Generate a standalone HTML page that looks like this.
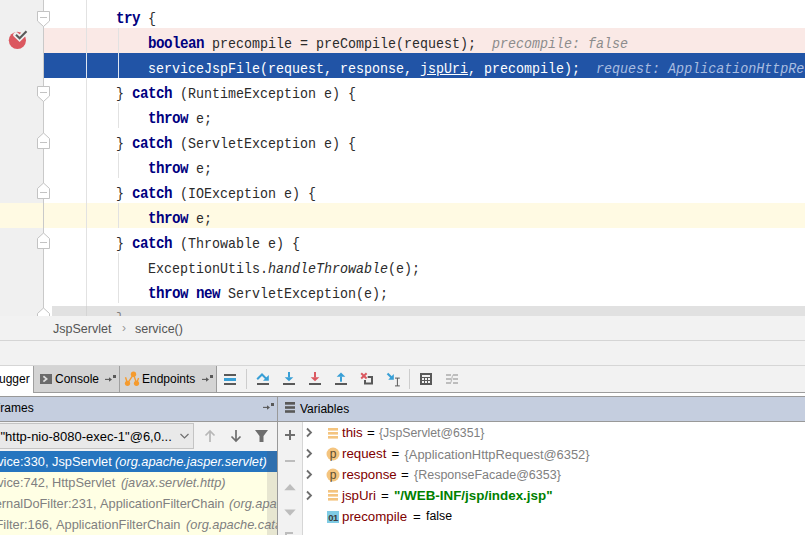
<!DOCTYPE html>
<html><head><meta charset="utf-8">
<style>
*{margin:0;padding:0;box-sizing:border-box}
html,body{width:805px;height:535px;overflow:hidden;background:#fff;font-family:"Liberation Sans",sans-serif}
.abs{position:absolute}
#editor{position:absolute;left:0;top:0;width:805px;height:316px;background:#fff;overflow:hidden}
#gutter{position:absolute;left:0;top:0;width:44px;height:316px;background:#f0f0f0}
.row{position:absolute;left:0;width:805px;height:25px}
.code{position:absolute;left:52px;margin-top:4px;white-space:pre;font-family:"Liberation Mono",monospace;font-size:15px;line-height:25px;transform-origin:0 0;transform:scaleX(0.88889);color:#2b2b2b}
.kw{color:#000080;font-weight:bold;font-size:16px;letter-spacing:-0.6px}
.hint{color:#8c8c8c;font-style:italic}
.ig{position:absolute;width:1px;background:#e2e2e2}
#crumbs{position:absolute;left:0;top:316px;width:805px;height:25px;background:#f2f2f2;border-bottom:1px solid #d5d5d5}
.ui{font-family:"Liberation Sans",sans-serif;font-size:12px;white-space:pre}
</style></head><body>
<div id="editor">
  <div id="gutter"></div>
  <!-- row backgrounds -->
  <div class="row" style="top:28px;left:44px;background:#fae9e6"></div>
  <div class="row" style="top:53px;left:44px;background:#2154a6"></div>
  <div class="row" style="top:203px;background:#fffae3"></div>
  <!-- gutter line -->
  <div class="abs" style="left:43px;top:0;width:1px;height:316px;background:#c9c9c9"></div>
  <!-- indent guides -->
  <div class="ig" style="left:86px;top:0;height:316px"></div>
  <div class="ig" style="left:118px;top:28px;height:50px"></div>
  <div class="ig" style="left:118px;top:103px;height:25px"></div>
  <div class="ig" style="left:118px;top:153px;height:25px"></div>
  <div class="ig" style="left:118px;top:203px;height:25px"></div>
  <div class="ig" style="left:118px;top:253px;height:50px"></div>
  <div class="abs" style="left:86px;top:53px;width:1px;height:25px;background:#dfe6f2"></div>
  <div class="abs" style="left:118px;top:53px;width:1px;height:25px;background:#dfe6f2"></div>
  <!-- code -->
  <div class="code" style="top:3px">        <span class="kw">try</span> {</div>
  <div class="code" style="top:28px">            <span class="kw">boolean</span> precompile = preCompile(request);  <span class="hint">precompile: false</span></div>
  <div class="code" style="top:53px;color:#fff">            serviceJspFile(request, response, <u>jspUri</u>, precompile);  <span class="hint" style="color:#a9bde0">request: ApplicationHttpRequest@6352</span></div>
  <div class="code" style="top:78px">        } <span class="kw">catch</span> (RuntimeException e) {</div>
  <div class="code" style="top:103px">            <span class="kw">throw</span> e;</div>
  <div class="code" style="top:128px">        } <span class="kw">catch</span> (ServletException e) {</div>
  <div class="code" style="top:153px">            <span class="kw">throw</span> e;</div>
  <div class="code" style="top:178px">        } <span class="kw">catch</span> (IOException e) {</div>
  <div class="code" style="top:203px">            <span class="kw">throw</span> e;</div>
  <div class="code" style="top:228px">        } <span class="kw">catch</span> (Throwable e) {</div>
  <div class="code" style="top:253px">            ExceptionUtils.<i>handleThrowable</i>(e);</div>
  <div class="code" style="top:278px">            <span class="kw">throw new</span> ServletException(e);</div>
  <div class="code" style="top:303px">        }</div>
  <!-- scrollbar -->
  <div class="abs" style="left:52px;top:306px;width:753px;height:10px;background:rgba(200,200,200,0.55)"></div>
  <!-- fold markers -->
  <svg class="abs" style="left:0;top:0" width="60" height="316">
    <g fill="#fff" stroke="#c3c3c3" stroke-width="1">
      <path d="M37.5 11.5H49.5V21L43.5 26.5L37.5 21Z"/>
      <path d="M37.5 86.5H49.5V96L43.5 101.5L37.5 96Z"/>
      <path d="M37.5 148.5V138.5L43.5 133L49.5 138.5V148.5Z"/>
      <path d="M37.5 198.5V188.5L43.5 183L49.5 188.5V198.5Z"/>
      <path d="M37.5 248.5V238.5L43.5 233L49.5 238.5V248.5Z"/>
      <path d="M37.5 323.5V313.5L43.5 308L49.5 313.5V323.5Z"/>
    </g>
    <g stroke="#c3c3c3" stroke-width="1">
      <path d="M40 17.5H47M40 92.5H47M40 142.5H47M40 192.5H47M40 242.5H47"/>
    </g>
    <!-- breakpoint -->
    <circle cx="17.4" cy="40.3" r="8.6" fill="#db5860"/>
    <path d="M16 34.8L19.6 38.2L26.5 31.3" fill="none" stroke="#f0f0f0" stroke-width="5.5" stroke-linecap="round"/>
    <path d="M16 34.8L19.6 38.2L26.5 31.3" fill="none" stroke="#595959" stroke-width="2.1"/>
  </svg>
</div>
<div id="crumbs">
  <span class="ui abs" style="left:53px;top:6px;color:#555;font-size:12.5px">JspServlet</span>
  <span class="ui abs" style="left:122px;top:5px;color:#999">›</span>
  <span class="ui abs" style="left:135px;top:6px;color:#555;font-size:12.5px">service()</span>
</div>

<!-- tabs row -->
<div class="abs" style="left:0;top:365px;width:805px;height:1px;background:#d6d6d6"></div>
<div class="abs" style="left:0;top:366px;width:805px;height:26px;background:#f2f2f2"></div>
<div class="abs" style="left:0;top:366px;width:33px;height:30px;background:#fff"></div>
<div class="abs" style="left:33px;top:366px;width:184px;height:27px;background:#d4d4d4;border-left:1px solid #a0a0a0;border-bottom:1px solid #9c9c9c"></div>
<div class="abs" style="left:119px;top:366px;width:1px;height:26px;background:#a0a0a0"></div>
<div class="abs" style="left:216px;top:366px;width:1px;height:26px;background:#9c9c9c"></div>
<div class="abs" style="left:216px;top:392px;width:589px;height:1px;background:#9c9c9c"></div>
<div class="abs" style="left:0;top:393px;width:805px;height:3px;background:#fff"></div>
<div class="abs" style="left:0;top:396px;width:805px;height:1px;background:#999"></div>
<span class="ui abs" style="left:-23px;top:372px;color:#000">Debugger</span>
<div class="abs" style="left:40px;top:374px;width:12px;height:10px;background:#6a6a6a"></div>
<svg class="abs" style="left:40px;top:374px" width="12" height="10"><path d="M3.4 2.2L6.6 4.9L3.4 7.6" fill="none" stroke="#dcdcdc" stroke-width="1.8"/></svg>
<span class="ui abs" style="left:55px;top:372px;color:#000">Console</span>
<svg class="abs" style="left:104px;top:373px" width="14" height="12"><path d="M1 6.4H6" stroke="#595959" stroke-width="1.1"/><path d="M5 4.2L8 6.5L5 8.8Z" fill="#595959"/><rect x="9" y="2" width="3" height="3" fill="#595959"/></svg>
<svg class="abs" style="left:120px;top:366px" width="22" height="24"><path d="M5.5 11.3L7.5 17.3L13.5 8.3L16.5 17.3L18.6 12" fill="none" stroke="#f59b2e" stroke-width="1.4"/><circle cx="13.5" cy="8.3" r="2.7" fill="#f59b2e"/><circle cx="7.5" cy="17.3" r="2.6" fill="#f59b2e"/><circle cx="16.5" cy="17.3" r="2.6" fill="#f59b2e"/></svg>
<span class="ui abs" style="left:142px;top:372px;color:#000">Endpoints</span>
<svg class="abs" style="left:201px;top:373px" width="14" height="12"><path d="M1 6.4H6" stroke="#595959" stroke-width="1.1"/><path d="M5 4.2L8 6.5L5 8.8Z" fill="#595959"/><rect x="9" y="2" width="3" height="3" fill="#595959"/></svg>
<!-- toolbar icons -->
<svg class="abs" style="left:216px;top:366px" width="260" height="26">
  <rect x="8" y="8" width="12" height="2" fill="#595959"/>
  <rect x="8" y="12" width="12" height="3" fill="#389fd6"/>
  <rect x="8" y="17" width="12" height="2" fill="#595959"/>
  <rect x="30" y="3" width="1" height="20" fill="#cdcdcd"/>
  <!-- step over -->
  <path d="M41.2 13.3L46 8.5L50.5 13" fill="none" stroke="#389fd6" stroke-width="2"/>
  <path d="M52.8 9V14.8H47Z" fill="#389fd6"/>
  <rect x="41" y="17" width="12" height="2" fill="#595959"/>
  <!-- step into -->
  <rect x="72" y="6" width="2" height="5.5" fill="#389fd6"/>
  <path d="M68.7 11.2H77.3L73 15.3Z" fill="#389fd6"/>
  <rect x="67" y="17" width="12" height="2" fill="#595959"/>
  <!-- force step into -->
  <rect x="98" y="6" width="2" height="5.5" fill="#db5860"/>
  <path d="M94.7 11.2H103.3L99 15.3Z" fill="#db5860"/>
  <rect x="93" y="17" width="12" height="2" fill="#595959"/>
  <!-- step out -->
  <path d="M125 6.4L120.7 10.7H129.3Z" fill="#389fd6"/>
  <rect x="124" y="10.5" width="2" height="5.2" fill="#389fd6"/>
  <rect x="119" y="17" width="12" height="2" fill="#595959"/>
  <!-- drop frame -->
  <path d="M145.2 7.3L150.6 12.5M150.6 7.3L145.2 12.5" stroke="#db5860" stroke-width="2"/>
  <path d="M151.7 10.9H156V17.6H149V14" fill="none" stroke="#595959" stroke-width="2"/>
  <!-- run to cursor -->
  <path d="M171.5 7.5L175.5 11.5" stroke="#389fd6" stroke-width="2.2"/>
  <path d="M177.8 8.1V13.7H172.2Z" fill="#389fd6"/>
  <path d="M179 12.1H183.8M179 19.9H183.8M181.4 12.1V19.9" fill="none" stroke="#595959" stroke-width="1"/>
  <rect x="193" y="3" width="1" height="20" fill="#cdcdcd"/>
  <!-- evaluate -->
  <rect x="204" y="7" width="12" height="12" fill="#595959"/>
  <rect x="206" y="9" width="8" height="2" fill="#f2f2f2"/>
  <g fill="#f2f2f2"><rect x="206" y="12" width="2" height="2"/><rect x="209" y="12" width="2" height="2"/><rect x="212" y="12" width="2" height="2"/><rect x="206" y="15" width="2" height="2"/><rect x="209" y="15" width="2" height="2"/><rect x="212" y="15" width="2" height="2"/></g>
  <!-- trace -->
  <g fill="#bdbdbd">
    <rect x="230" y="8" width="5" height="2"/><rect x="237" y="8" width="5" height="2"/>
    <rect x="230" y="12" width="5" height="2"/><rect x="237" y="12" width="5" height="2"/>
    <rect x="230" y="16" width="5" height="2"/><rect x="237" y="16" width="5" height="2"/>
  </g>
  <path d="M234 17C236.2 17 235.3 9 237.5 9" fill="none" stroke="#bdbdbd" stroke-width="1.2"/>
</svg>
<!-- header row -->
<div class="abs" style="left:0;top:397px;width:805px;height:24px;background:#c5cedf"></div>
<div class="abs" style="left:0;top:421px;width:805px;height:1px;background:#999"></div>
<span class="ui abs" style="left:-7px;top:401px;color:#000">Frames</span>
<svg class="abs" style="left:262px;top:401px" width="14" height="12"><path d="M1 6.4H6" stroke="#595959" stroke-width="1.1"/><path d="M5 4.2L8 6.5L5 8.8Z" fill="#595959"/><rect x="9" y="2" width="3" height="3" fill="#595959"/></svg>
<div class="abs" style="left:277px;top:397px;width:1px;height:138px;background:#999"></div>
<svg class="abs" style="left:285px;top:402px" width="11" height="12"><rect x="0" y="0" width="10" height="2.7" fill="#595959"/><rect x="0" y="4.2" width="10" height="2.6" fill="#595959"/><rect x="0" y="8.2" width="10" height="2.6" fill="#595959"/></svg>
<span class="ui abs" style="left:300px;top:402px;color:#000">Variables</span>
<!-- frames panel -->
<div class="abs" style="left:0;top:422px;width:277px;height:29px;background:#f2f2f2"></div>
<div class="abs" style="left:-5px;top:423px;width:199px;height:26px;background:#e9e9e9;border:1px solid #c4c4c4"></div>
<span class="ui abs" style="left:0.5px;top:429px;color:#000;font-size:13px">"http-nio-8080-exec-1"@6,0...</span>
<svg class="abs" style="left:179px;top:431px" width="12" height="10"><path d="M1.5 3L5.5 7L9.5 3" fill="none" stroke="#6e6e6e" stroke-width="1.2"/></svg>
<svg class="abs" style="left:203px;top:429px" width="70" height="14">
  <g fill="none" stroke="#b8b8b8" stroke-width="1.7"><path d="M7 13V2M2.5 6.5L7 2L11.5 6.5"/></g>
  <g fill="none" stroke="#6e6e6e" stroke-width="1.7" transform="translate(26,0)"><path d="M7 1V12M2.5 7.5L7 12L11.5 7.5"/></g>
  <path d="M52 1H65L60.5 7V13H56.5V7Z" fill="#6e6e6e"/>
</svg>
<div class="abs" style="left:0;top:451px;width:277px;height:21px;background:#2675bf"></div>
<div class="abs" style="left:0;top:472px;width:277px;height:63px;background:#ffffe4"></div>
<div class="abs" style="left:267px;top:451px;width:10px;height:21px;background:#2f6fae"></div>
<div class="abs" style="left:267px;top:472px;width:10px;height:63px;background:#e7e6d1"></div>
<div class="frames abs" style="left:0;top:451px;width:277px;height:84px;overflow:hidden;font-size:12.8px;white-space:pre;line-height:15px">
  <span class="abs" style="right:225px;top:3px;color:#fff">service:330, </span><span class="abs" style="left:52px;top:3px;color:#fff">JspServlet </span><i class="abs" style="left:115px;top:3px;color:#fff">(org.apache.jasper.servlet)</i>
  <span class="abs" style="right:225px;top:24px;color:#808080">service:742, </span><span class="abs" style="left:52px;top:24px;color:#808080">HttpServlet </span><i class="abs" style="left:121px;top:24px;color:#808080">(javax.servlet.http)</i>
  <span class="abs" style="right:177px;top:45px;color:#808080">internalDoFilter:231, </span><span class="abs" style="left:100px;top:45px;color:#808080">ApplicationFilterChain </span><i class="abs" style="left:229px;top:45px;color:#808080">(org.apache.catalina.core)</i>
  <span class="abs" style="right:221px;top:66px;color:#808080">doFilter:166, </span><span class="abs" style="left:56px;top:66px;color:#808080">ApplicationFilterChain </span><i class="abs" style="left:186px;top:66px;color:#808080">(org.apache.catalina.core)</i>
</div>
<!-- variables toolbar -->
<div class="abs" style="left:278px;top:422px;width:25px;height:113px;background:#f2f2f2;border-right:1px solid #d6d6d6"></div>
<svg class="abs" style="left:278px;top:422px" width="24" height="113">
  <path d="M7 13H17M12 8V18" stroke="#6e6e6e" stroke-width="2"/>
  <path d="M7 39H17" stroke="#bdbdbd" stroke-width="2"/>
  <path d="M6.3 68.3L12 62L17.7 68.3Z" fill="#bdbdbd"/>
  <path d="M6.3 87.5L12 93.8L17.7 87.5Z" fill="#bdbdbd"/>
  <path d="M8 114V111H15" fill="none" stroke="#bdbdbd" stroke-width="2"/>
</svg>
<!-- variables tree -->
<div class="abs" style="left:303px;top:422px;width:502px;height:113px;background:#fff"></div>
<svg class="abs" style="left:303px;top:422px" width="40" height="113">
  <g fill="none" stroke="#6e6e6e" stroke-width="1.8">
    <path d="M4 6.5L8 10.5L4 14.5"/>
    <path d="M4 27.5L8 31.5L4 35.5"/>
    <path d="M4 48.5L8 52.5L4 56.5"/>
    <path d="M4 69.5L8 73.5L4 77.5"/>
  </g>
  <g fill="#f4c47f">
    <rect x="25" y="6" width="10" height="2.6"/><rect x="25" y="10" width="10" height="2.6"/><rect x="25" y="14" width="10" height="2.6"/>
    <rect x="25" y="68" width="10" height="2.6"/><rect x="25" y="72" width="10" height="2.6"/><rect x="25" y="76" width="10" height="2.6"/>
  </g>
  <circle cx="30" cy="32" r="6.5" fill="#f4c47f"/>
  <circle cx="30" cy="53" r="6.5" fill="#f4c47f"/>
  <text x="30.2" y="35.6" font-family="Liberation Sans" font-size="12" text-anchor="middle" fill="#5e4e30">p</text>
  <text x="30.2" y="56.6" font-family="Liberation Sans" font-size="12" text-anchor="middle" fill="#5e4e30">p</text>
  <rect x="24" y="89" width="12" height="12" fill="#7fcbe5"/>
  <text x="30" y="98.5" font-family="Liberation Sans" font-size="9.5" font-weight="bold" text-anchor="middle" fill="#3c3c3c" letter-spacing="-0.5">01</text>
</svg>
<div class="vars abs" style="left:0;top:422px;width:805px;height:113px;white-space:pre;line-height:15px;font-size:13.3px">
  <span class="abs" style="left:342px;top:3px;color:#800000">this</span><span class="abs" style="left:367px;top:3px">=</span><span class="abs" style="left:379px;top:4px;color:#808080;font-size:12.3px">{JspServlet@6351}</span>
  <span class="abs" style="left:342px;top:24px;color:#800000">request</span><span class="abs" style="left:391.5px;top:24px">=</span><span class="abs" style="left:404.5px;top:25px;color:#808080;font-size:12.9px">{ApplicationHttpRequest@6352}</span>
  <span class="abs" style="left:342px;top:45px;color:#800000">response</span><span class="abs" style="left:401px;top:45px">=</span><span class="abs" style="left:414px;top:46px;color:#808080;font-size:12.5px">{ResponseFacade@6353}</span>
  <span class="abs" style="left:342px;top:66px;color:#800000">jspUri</span><span class="abs" style="left:381px;top:66px">=</span><b class="abs" style="left:394px;top:66px;color:#008000;font-size:13.4px">"/WEB-INF/jsp/index.jsp"</b>
  <span class="abs" style="left:342px;top:87px;color:#800000">precompile</span><span class="abs" style="left:413px;top:87px">=</span><span class="abs" style="left:426px;top:87px;font-size:12.3px">false</span>
</div>
<!-- blank bar -->
<div class="abs" style="left:0;top:341px;width:805px;height:24px;background:#f2f2f2"></div>
</body></html>
